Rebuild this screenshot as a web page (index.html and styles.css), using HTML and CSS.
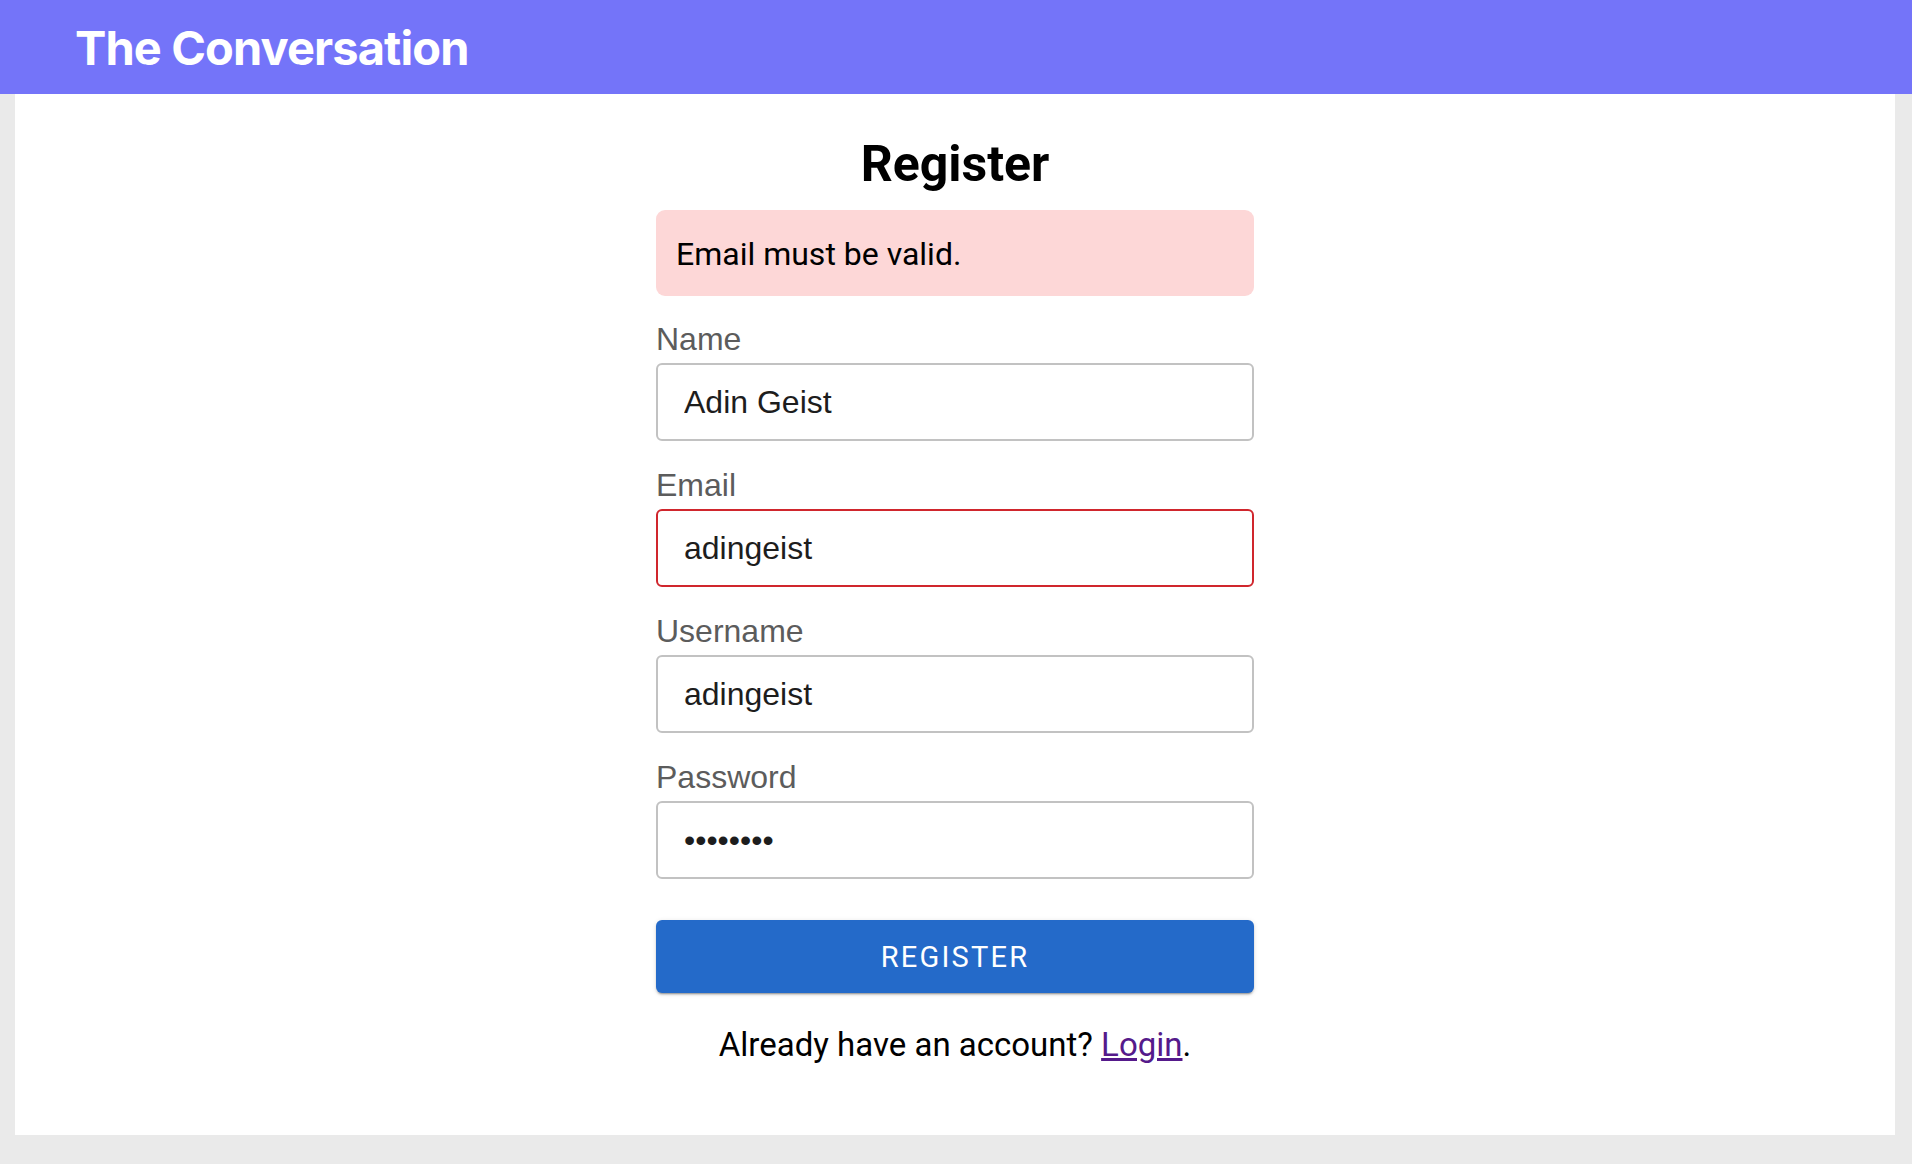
FILE: index.html
```html
<!DOCTYPE html>
<html lang="en">
<head>
<meta charset="utf-8">
<title>The Conversation - Register</title>
<link rel="stylesheet" href="styles.css">
</head>
<body>
<header class="topbar">
  <h1 class="brand">The Conversation</h1>
</header>
<main class="panel">
  <form class="form" onsubmit="return false;">
    <h2 class="title">Register</h2>
    <div class="alert">Email must be valid.</div>
    <div class="field">
      <label class="label" for="name">Name</label>
      <input class="input" id="name" type="text" value="Adin Geist">
    </div>
    <div class="field">
      <label class="label" for="email">Email</label>
      <input class="input input-error" id="email" type="text" value="adingeist">
    </div>
    <div class="field">
      <label class="label" for="username">Username</label>
      <input class="input" id="username" type="text" value="adingeist">
    </div>
    <div class="field">
      <label class="label" for="password">Password</label>
      <input class="input" id="password" type="password" value="secret12">
    </div>
    <button class="btn" type="submit">Register</button>
    <p class="foot">Already have an account? <a class="link" href="#login">Login</a>.</p>
  </form>
</main>
</body>
</html>
```
FILE: styles.css
```css
html, body {
  margin: 0;
  padding: 0;
}
body {
  background: #eaeaea;
  font-family: Roboto, "Liberation Sans", Arial, sans-serif;
  color: #000;
}
.topbar {
  height: 94px;
  background: #7474f9;
  display: flex;
  align-items: center;
  padding-left: 75px;
}
.brand {
  margin: 0;
  font-family: Inter, Roboto, sans-serif;
  font-weight: 700;
  font-size: 47px;
  letter-spacing: -0.9px;
  color: #fff;
  line-height: 1;
}
.panel {
  margin: 0 17px 29px 15px;
  background: #fff;
  height: 1041px;
  box-sizing: border-box;
  padding-top: 40px;
  display: flex;
  justify-content: center;
}
.form {
  width: 598px;
  display: flex;
  flex-direction: column;
}
.title {
  margin: 0 0 16px;
  text-align: center;
  font-family: Roboto, sans-serif;
  font-weight: 700;
  font-size: 50px;
  line-height: 60px;
}
.alert {
  background: #fdd7d7;
  border-radius: 9px;
  padding: 26px 20px 24px;
  font-size: 32px;
  line-height: 36px;
  margin-bottom: 25px;
}
.field {
  display: flex;
  flex-direction: column;
  margin-bottom: 26px;
}
.label {
  font-family: "Liberation Sans", Arial, sans-serif;
  font-size: 32px;
  line-height: 36px;
  color: #5c5c5c;
  margin-bottom: 6px;
}
.input {
  box-sizing: border-box;
  height: 78px;
  border: 2px solid #c2c2c2;
  border-radius: 6px;
  padding: 0 26px;
  font-family: "Liberation Sans", Arial, sans-serif;
  font-size: 32px;
  color: #1d1d1d;
  background: #fff;
  outline: none;
}
.input-error {
  border-color: #d0262d;
}
.btn {
  margin-top: 15px;
  height: 73px;
  border: none;
  border-radius: 6px;
  background: #246ac9;
  color: #fff;
  font-family: Roboto, sans-serif;
  font-size: 29px;
  letter-spacing: 2.2px;
  text-transform: uppercase;
  box-shadow: 0 3px 1px -2px rgba(0,0,0,0.2), 0 2px 2px 0 rgba(0,0,0,0.14), 0 1px 5px 0 rgba(0,0,0,0.12);
  cursor: pointer;
}
.foot {
  margin: 33px 0 0;
  text-align: center;
  font-size: 33px;
  line-height: 38px;
}
.link {
  color: #551a8b;
  text-decoration: underline;
}
```
